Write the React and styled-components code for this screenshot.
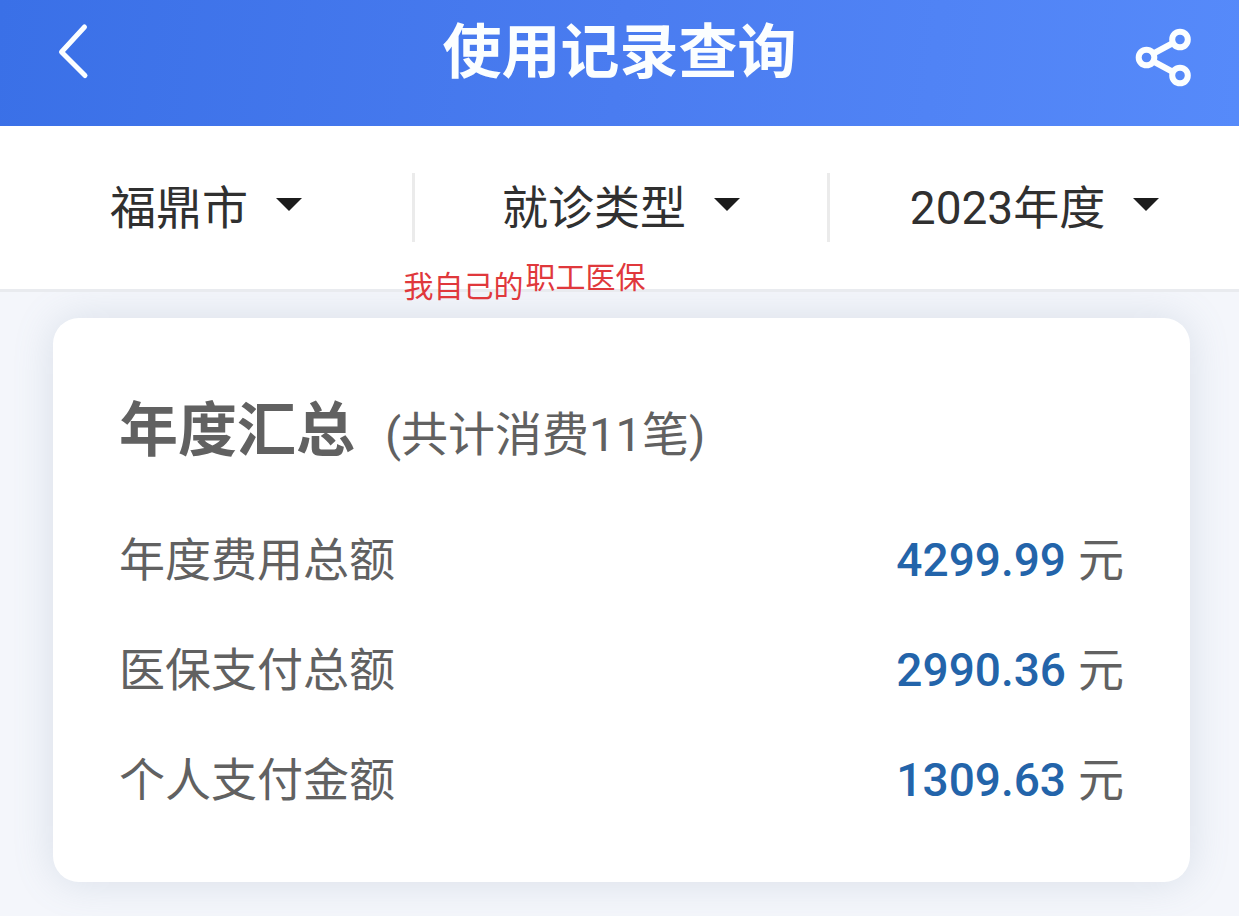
import React, { useState } from "react";
import styled, { createGlobalStyle } from "styled-components";

const GlobalStyle = createGlobalStyle`
  * {
    box-sizing: border-box;
  }

  body {
    margin: 0;
    background: #f4f6fb;
    font-family: Roboto, "Noto Sans CJK SC", sans-serif;
    color: #616161;
  }
`;

const Header = styled.header`
  display: flex;
  align-items: center;
  justify-content: space-between;
  height: 126px;
  padding: 0 48px 20px;
  background: linear-gradient(97deg, #3a70e7 0%, #4a7cf0 50%, #568afa 100%);
  color: #fbfeff;
`;

const Title = styled.h1`
  margin: 0;
  font-size: 59px;
  line-height: 80px;
  font-weight: 700;
`;

const IconButton = styled.button`
  display: flex;
  padding: 0;
  border: 0;
  background: none;
  color: inherit;
  cursor: pointer;
`;

const FilterBar = styled.div`
  position: relative;
  display: grid;
  grid-template-columns: 412fr 415fr 412fr;
  padding: 47px 0;
  background: #fff;
  border-bottom: 3px solid #e9ebef;
`;

const FilterCell = styled.label`
  display: flex;
  align-items: center;
  justify-content: center;
  gap: 28px;
  height: 69px;
  border-left: ${(props) => (props.$divided ? "3px solid #ebebeb" : "0")};
`;

const FilterSelect = styled.select`
  appearance: none;
  field-sizing: content;
  padding: 0;
  border: 0;
  background: none;
  color: #303030;
  font-family: inherit;
  font-size: 46px;
  line-height: 68px;
  cursor: pointer;
`;

const Caret = styled.span`
  margin-bottom: 6px;
  border: 13px solid transparent;
  border-top-color: #1c1c1c;
  border-bottom-width: 0;
`;

// 手写备注，浮在筛选栏下边缘
const Note = styled.span`
  position: absolute;
  left: calc(50% - ${(props) => props.$left}px);
  bottom: ${(props) => props.$bottom}px;
  color: #e0383c;
  font-size: 30px;
  line-height: 40px;
  white-space: nowrap;
`;

const Main = styled.main`
  padding: 26px 49px 34px 53px;
`;

const Card = styled.section`
  padding: 68px 66px 47px;
  border-radius: 26px;
  background: #fff;
  box-shadow: 0 0 40px rgba(110, 135, 160, 0.2);
`;

const CardTitle = styled.h2`
  display: flex;
  align-items: baseline;
  gap: 30px;
  margin: 0 0 25px;
  font-size: 59px;
  line-height: 90px;
  font-weight: 700;
`;

const Count = styled.span`
  font-size: 47px;
  font-weight: 400;
`;

const List = styled.dl`
  margin: 0;
`;

const Row = styled.div`
  display: flex;
  align-items: baseline;
  justify-content: space-between;
  font-size: 46px;
  line-height: 110px;
`;

const Value = styled.dd`
  display: flex;
  gap: 12px;
  margin: 0;
`;

const Amount = styled.span`
  color: #2364aa;
  font-weight: 500;
`;

const filters = [
  { name: "地区", options: ["福鼎市", "福州市"] },
  { name: "类型", options: ["就诊类型", "门诊", "住院"] },
  { name: "年度", options: ["2023年度", "2022年度"] },
];

const summary = [
  { label: "年度费用总额", amount: "4299.99" },
  { label: "医保支付总额", amount: "2990.36" },
  { label: "个人支付金额", amount: "1309.63" },
];

function BackIcon() {
  return (
    <svg width="56" height="60" viewBox="0 0 56 60" fill="none" stroke="currentColor" strokeWidth="5" strokeLinecap="round" strokeLinejoin="round">
      <path d="M36.5 4L13.5 29L37 52.5" />
    </svg>
  );
}

function ShareIcon() {
  return (
    <svg width="56" height="72" viewBox="0 0 56 72" fill="none" stroke="currentColor" strokeWidth="6">
      <circle cx="11.5" cy="40.5" r="7.8" />
      <circle cx="45" cy="22.5" r="7.8" />
      <circle cx="45" cy="58.5" r="7.8" />
      <path d="M18.5 36.5L38 26M18.5 44.5L38 55" />
    </svg>
  );
}

function Filter({ name, options, divided }) {
  const [value, setValue] = useState(options[0]);

  return (
    <FilterCell $divided={divided}>
      <FilterSelect aria-label={name} value={value} onChange={(e) => setValue(e.target.value)}>
        {options.map((option) => (
          <option key={option}>{option}</option>
        ))}
      </FilterSelect>
      <Caret />
    </FilterCell>
  );
}

export default function App() {
  return (
    <>
      <GlobalStyle />
      <Header>
        <IconButton type="button" aria-label="返回">
          <BackIcon />
        </IconButton>
        <Title>使用记录查询</Title>
        <IconButton type="button" aria-label="分享">
          <ShareIcon />
        </IconButton>
      </Header>
      <FilterBar>
        {filters.map((filter, i) => (
          <Filter key={filter.name} name={filter.name} options={filter.options} divided={i > 0} />
        ))}
        <Note $left={216} $bottom={-18}>我自己的</Note>
        <Note $left={94} $bottom={-9}>职工医保</Note>
      </FilterBar>
      <Main>
        <Card>
          <CardTitle>
            年度汇总
            <Count>(共计消费11笔)</Count>
          </CardTitle>
          <List>
            {summary.map((item) => (
              <Row key={item.label}>
                <dt>{item.label}</dt>
                <Value>
                  <Amount>{item.amount}</Amount>
                  <span>元</span>
                </Value>
              </Row>
            ))}
          </List>
        </Card>
      </Main>
    </>
  );
}
